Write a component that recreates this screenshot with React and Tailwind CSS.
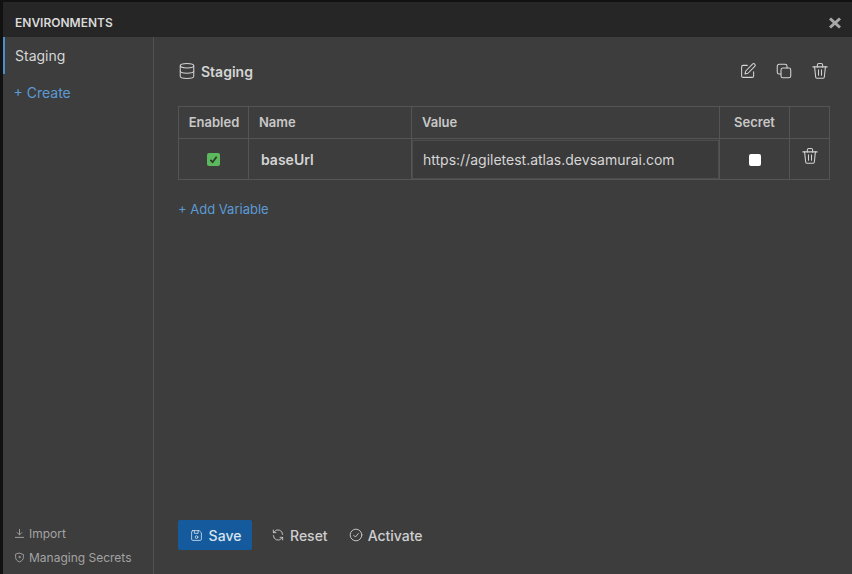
import React from "react";

const I = ({ size = 16, sw = 1.5, children, className = "" }) => (
  <svg width={size} height={size} viewBox="0 0 24 24" fill="none" stroke="currentColor" strokeWidth={sw} strokeLinecap="round" strokeLinejoin="round" className={className}>{children}</svg>
);
const Trash = ({ size = 18 }) => (
  <I size={size} sw={1.4}>
    <path d="M2.500 6.500h19" /><path d="M8.500 6.500V4a2 2 0 0 1 2-2h3a2 2 0 0 1 2 2v2.500" /><path d="M4.800 6.500l1.400 13.500a1.800 1.800 0 0 0 1.800 1.600h8a1.800 1.800 0 0 0 1.800-1.600l1.400-13.500" /><path d="M10 10.500v7" /><path d="M14 10.500v7" />
  </I>
);

export default function App() {
  return (
    <div className="w-[852px] h-[574px] overflow-hidden bg-[#111111] pl-[3px] pt-[2px] text-[#d4d4d4]" style={{ fontFamily: "Inter, 'Liberation Sans', sans-serif" }}>
      <div className="flex flex-col h-full bg-[#3d3d3d]">
        <div className="h-[35px] shrink-0 bg-[#262626] flex items-center justify-between pl-3 pr-[11px] pt-[6px]">
          <span className="text-[12px] font-semibold text-[#d9d9d9]">ENVIRONMENTS</span>
          <svg width="12" height="12" viewBox="0 0 12 12" className="text-[#a8a8a8]" stroke="currentColor" strokeWidth="3"><path d="M1 1.500l10 9" /><path d="M11 1.500l-10 9" /></svg>
        </div>
        <div className="flex flex-1 min-h-0">
          <aside className="w-[151px] shrink-0 border-r border-[#525252] flex flex-col">
            <div className="h-[37px] flex items-center border-l-2 border-[#4a8fca] pl-[10px] text-[14px] text-[#d6d6d6]">Staging</div>
            <div className="h-[37px] flex items-center pl-[10.500px] text-[14px] text-[#5b9bd5]">+ Create</div>
            <div className="mt-auto pl-[11px] pb-[8px] text-[12px] text-[#a3a3a3] flex flex-col gap-[7px]">
              <div className="flex items-center gap-[4px] h-[17px]">
                <I size={11} sw={2}><path d="M12 3v12" /><path d="M7 10l5 5 5-5" /><path d="M3 20.500h18" /></I>
                <span>Import</span>
              </div>
              <div className="flex items-center gap-[4px] h-[17px]">
                <I size={11} sw={2}><path d="M12 2.500l8.500 3v6c0 5-3.500 8.500-8.500 10-5-1.500-8.500-5-8.500-10v-6z" /><circle cx="12" cy="11" r="1.500" /></I>
                <span>Managing Secrets</span>
              </div>
            </div>
          </aside>
          <main className="flex-1 flex flex-col pl-[24px] pr-[22px]">
            <div className="h-[69px] shrink-0 flex items-center justify-between w-[651px] pb-[1px]">
              <div className="flex items-center gap-[5px]">
                <I size={18} sw={1.4} className="text-[#d0d0d0]"><ellipse cx="12" cy="5" rx="9" ry="3" /><path d="M3 5v14c0 1.700 4 3 9 3s9-1.300 9-3V5" /><path d="M3 12c0 1.700 4 3 9 3s9-1.300 9-3" /></I>
                <span className="text-[14px] font-semibold text-[#d4d4d4]">Staging</span>
              </div>
              <div className="flex items-center gap-[18px] text-[#d4d4d4]">
                <I size={18} sw={1.4}><path d="M11 4.500H5.500A2 2 0 0 0 3.500 6.500v12a2 2 0 0 0 2 2h12a2 2 0 0 0 2-2V13" /><path d="M18 2.800a2 2 0 0 1 3 3L12 15l-4 1 1-4z" /></I>
                <I size={18} sw={1.4}><rect x="8" y="8" width="13" height="13" rx="2.500" /><path d="M16 8V5.500A2.500 2.500 0 0 0 13.500 3h-8A2.500 2.500 0 0 0 3 5.500v8A2.500 2.500 0 0 0 5.500 16H8" /></I>
                <Trash />
              </div>
            </div>
            <table className="w-[651px] table-fixed border-collapse text-[13px] border border-[#555555]">
              <colgroup>
                <col className="w-[70px]" /><col className="w-[163px]" /><col className="w-[308px]" /><col className="w-[70px]" /><col className="w-[40px]" />
              </colgroup>
              <thead>
                <tr className="h-[32px] text-[#c8c8c8]">
                  <th className="border border-[#555555] font-semibold text-center pl-[1px]">Enabled</th>
                  <th className="border border-[#555555] font-semibold text-left pl-[10px]">Name</th>
                  <th className="border border-[#555555] font-semibold text-left pl-[10px]">Value</th>
                  <th className="border border-[#555555] font-semibold text-center">Secret</th>
                  <th className="border border-[#555555]"></th>
                </tr>
              </thead>
              <tbody>
                <tr className="h-[41px]">
                  <td className="border border-[#555555] text-center">
                    <span className="inline-flex align-middle w-[13px] h-[13px] rounded-[2px] bg-[#5cb85c] items-center justify-center">
                      <svg width="9" height="9" viewBox="0 0 10 10" fill="none" stroke="#2b3a2b" strokeWidth="2"><path d="M1.500 5.500l2.500 2.500 4.500-6" /></svg>
                    </span>
                  </td>
                  <td className="border border-[#555555] pl-[12px] text-[14px] font-semibold text-[#d4d4d4]">baseUrl</td>
                  <td className="border border-[#555555] p-0">
                    <div className="h-[39px] flex items-center pl-[10px] bg-[#3a3a3a] border border-[#4d4d4d] text-[14px] text-[#d6d6d6]">https://agiletest.atlas.devsamurai.com</div>
                  </td>
                  <td className="border border-[#555555] text-center">
                    <span className="inline-block align-middle w-[12px] h-[12px] rounded-[2px] bg-white"></span>
                  </td>
                  <td className="border border-[#555555] text-center text-[#d4d4d4]">
                    <span className="inline-flex align-middle -mt-[7px]"><Trash /></span>
                  </td>
                </tr>
              </tbody>
            </table>
            <div className="mt-[20px] text-[13px] text-[#5b9bd5] leading-[18px]">+ Add Variable</div>
            <div className="mt-auto mb-[24px] flex items-center h-[30px] text-[14px] font-medium text-[#cfcfcf]">
              <div className="w-[74px] h-[30px] rounded-[2px] bg-[#155a9c] flex items-center justify-center gap-[6px] pl-[1px] text-[#d8e4f0]">
                <I size={13}><path d="M5 3h12l4 4v12a2 2 0 0 1-2 2H5a2 2 0 0 1-2-2V5a2 2 0 0 1 2-2z" /><path d="M8 3v5h7V3" /><circle cx="12" cy="15" r="2.500" /></I>
                <span>Save</span>
              </div>
              <div className="ml-[19px] flex items-center gap-[5px]">
                <I size={14}><path d="M20 11a8 8 0 0 0-14-5L4 8" /><path d="M4 3.500V8h4.500" /><path d="M4 13a8 8 0 0 0 14 5l2-2" /><path d="M20 20.500V16h-4.500" /></I>
                <span>Reset</span>
              </div>
              <div className="ml-[21px] flex items-center gap-[5px]">
                <I size={14}><circle cx="12" cy="12" r="10" /><path d="M8 12.500l3 3 5-6" /></I>
                <span>Activate</span>
              </div>
            </div>
          </main>
        </div>
      </div>
    </div>
  );
}
